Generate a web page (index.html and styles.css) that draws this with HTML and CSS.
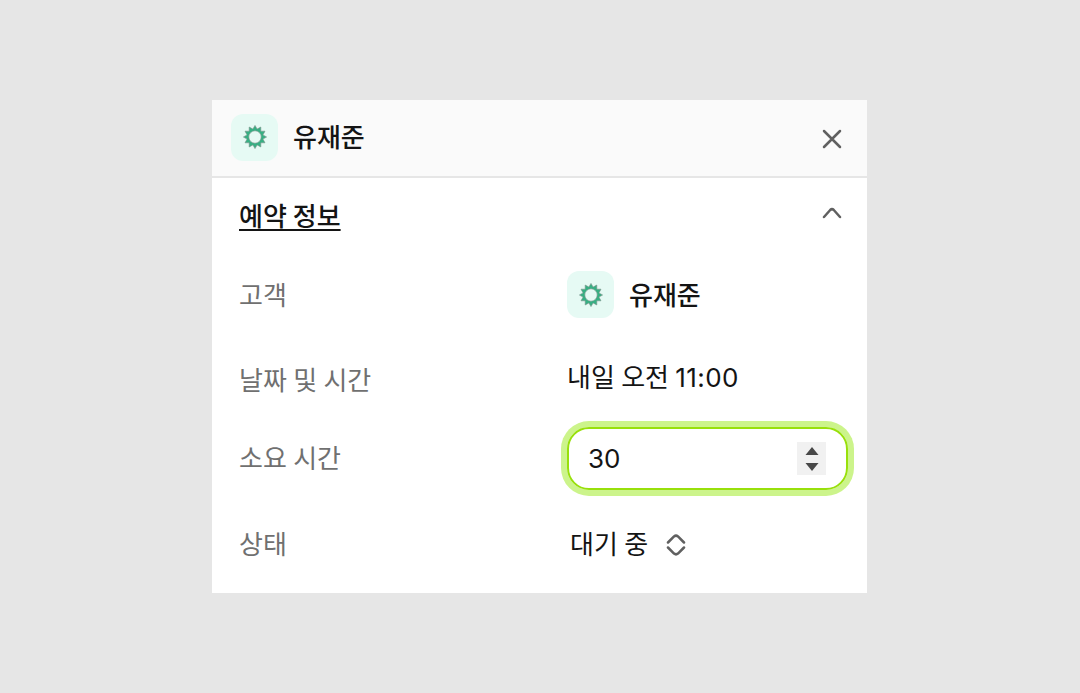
FILE: index.html
```html
<!DOCTYPE html>
<html lang="ko">
<head>
    <meta charset="UTF-8">
    <meta name="viewport" content="width=device-width, initial-scale=1.0">
    <title>예약 정보</title>
    <link rel="stylesheet" href="styles.css">
</head>
<body>
    <svg class="symbols" aria-hidden="true">
        <symbol id="gear" viewBox="-12 -12 24 24">
            <path fill="#36b083" stroke="#7d9189" stroke-width="0.6" stroke-linejoin="round" fill-rule="evenodd" d="M0 -11.6L2.1 -7.9L5.8 -10L5.8 -5.8L10 -5.8L7.9 -2.1L11.6 0L7.9 2.1L10 5.8L5.8 5.8L5.8 10L2.1 7.9L0 11.6L-2.1 7.9L-5.8 10L-5.8 5.8L-10 5.8L-7.9 2.1L-11.6 0L-7.9 -2.1L-10 -5.8L-5.8 -5.8L-5.8 -10L-2.1 -7.9ZM6.2 0A6.2 6.2 0 1 0 -6.2 0A6.2 6.2 0 1 0 6.2 0Z"/>
        </symbol>
    </svg>
    <div class="panel">
        <header class="panel-header">
            <span class="avatar"><svg width="24" height="24"><use href="#gear"/></svg></span>
            <span class="name">유재준</span>
            <button type="button" class="icon-button" aria-label="닫기">
                <svg width="20" height="20" viewBox="0 0 20 20"><path d="M2 2L18 18M18 2L2 18"/></svg>
            </button>
        </header>
        <div class="section-header">
            <h2>예약 정보</h2>
            <button type="button" class="icon-button" aria-label="접기">
                <svg width="20" height="12" viewBox="0 0 20 12"><path d="M2 10L8.2 3Q10 1.2 11.8 3L18 10"/></svg>
            </button>
        </div>
        <div class="row row-customer">
            <span class="label">고객</span>
            <div class="value">
                <span class="avatar"><svg width="24" height="24"><use href="#gear"/></svg></span>
                <span class="name">유재준</span>
            </div>
        </div>
        <div class="row row-date">
            <span class="label">날짜 및 시간</span>
            <div class="value"><span>내일 오전 <span class="time">11:00</span></span></div>
        </div>
        <div class="row row-duration">
            <label class="label" for="duration">소요 시간</label>
            <div class="number-field">
                <input type="text" id="duration" inputmode="numeric" value="30">
                <span class="spinner">
                    <svg width="14" height="24" viewBox="0 0 14 24"><path d="M7 0L13.5 8H0.5ZM7 24L13.5 16H0.5Z"/></svg>
                </span>
            </div>
        </div>
        <div class="row row-status">
            <span class="label">상태</span>
            <div class="value">
                <span>대기 중</span>
                <svg class="sort" width="20" height="22" viewBox="0 0 20 22"><path d="M2 8.5L8 2.4Q10 .8 12 2.4L18 8.5M2 13.5L8 19.6Q10 21.2 12 19.6L18 13.5"/></svg>
            </div>
        </div>
    </div>
</body>
</html>
```
FILE: styles.css
```css
body {
    margin: 0;
    height: 693px;
    display: flex;
    justify-content: center;
    align-items: center;
    background-color: #e6e6e6;
    font-family: Inter, "Noto Sans CJK KR", sans-serif;
    font-size: 26px;
    line-height: 38px;
    word-spacing: -1px;
    color: #141414;
}
.symbols {
    display: none;
}
.panel {
    width: 655px;
    height: 493px;
    margin-right: 1px;
    background: #fff;
}
.panel-header {
    display: flex;
    align-items: center;
    box-sizing: border-box;
    height: 78px;
    padding: 0 25px 2px 19px;
    background: #fafafa;
    border-bottom: 2px solid #e6e6e6;
}
.avatar {
    display: flex;
    align-items: center;
    justify-content: center;
    width: 47px;
    height: 47px;
    border-radius: 12px;
    background: #e6faf4;
}
.name {
    margin-left: 15px;
    padding-top: 2px;
    font-weight: 500;
}
.icon-button {
    display: flex;
    margin-left: auto;
    padding: 0;
    border: none;
    background: none;
}
.icon-button path, .sort path {
    fill: none;
    stroke: #606060;
    stroke-width: 2.5;
    stroke-linecap: round;
}
.panel-header .icon-button {
    margin-top: 4px;
}
.section-header {
    display: flex;
    align-items: center;
    height: 76px;
    padding: 0 25px 0 27px;
}
.section-header .icon-button {
    margin-bottom: 7px;
}
h2 {
    margin: 0;
    padding-top: 2px;
    font-size: 26px;
    font-weight: 500;
    text-decoration: underline;
    text-decoration-thickness: 2px;
    text-decoration-skip-ink: none;
    text-underline-offset: 3px;
}
.row {
    display: grid;
    grid-template-columns: 328px 281px;
    align-items: center;
    padding-left: 27px;
}
.label {
    padding-top: 1px;
    color: #707070;
}
.value {
    display: flex;
    align-items: center;
}
.row-customer {
    height: 82px;
}
.row-customer .avatar {
    margin-bottom: 1px;
}
.row-date {
    height: 85px;
}
.row-date .label {
    padding-top: 4px;
}
.row-date .value {
    padding-bottom: 2px;
}
.time {
    letter-spacing: 0.4px;
}
.row-duration {
    height: 75px;
}
.row-status {
    height: 97px;
}
.row-status .value {
    gap: 18px;
    padding-left: 3px;
}
.number-field {
    display: flex;
    align-items: center;
    box-sizing: border-box;
    height: 63px;
    padding: 0 20px 0 19px;
    border: 2px solid #98e00b;
    border-radius: 22px;
    box-shadow: 0 0 0 6px #ccf48b;
}
.number-field input {
    flex: 1;
    min-width: 0;
    padding: 0;
    border: none;
    outline: none;
    background: none;
    font: inherit;
    color: inherit;
}
.spinner {
    display: flex;
    align-items: center;
    justify-content: center;
    width: 29px;
    height: 33px;
    background: #f1f1f1;
    fill: #484848;
}
```
